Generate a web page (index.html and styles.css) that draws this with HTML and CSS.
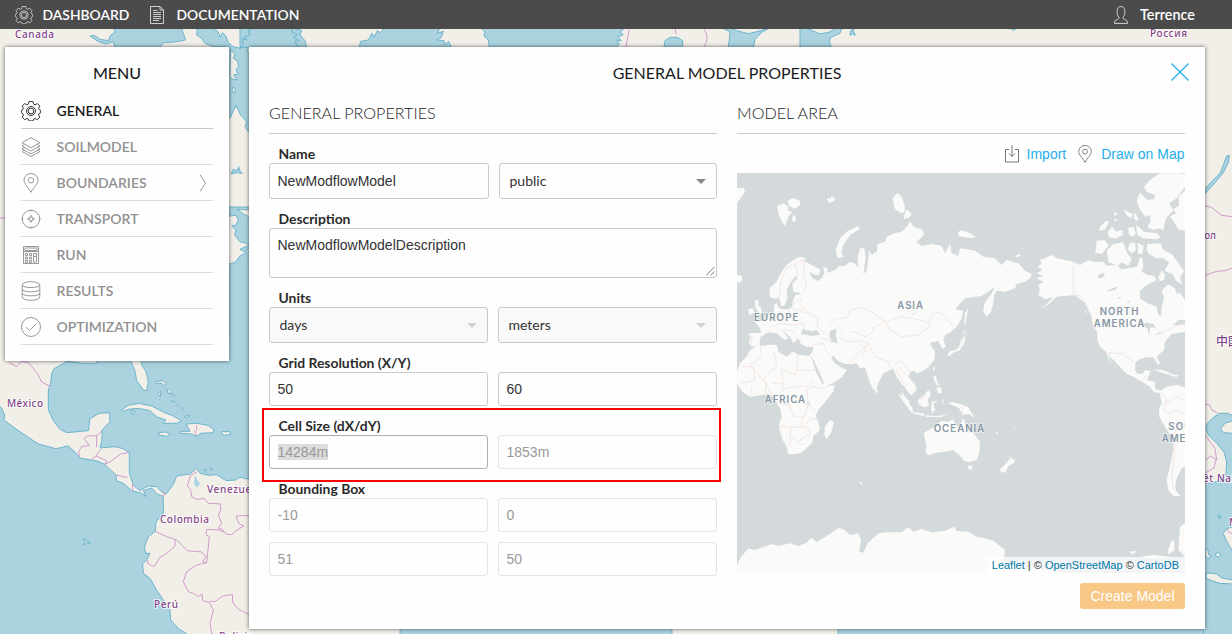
FILE: index.html
```html
<!DOCTYPE html>
<html lang="en">
<head>
<meta charset="utf-8">
<title>General Model Properties</title>
<link rel="stylesheet" href="styles.css">
</head>
<body>
<svg class="world" viewBox="0 0 1232 634" width="1232" height="634" aria-hidden="true">
  <rect width="1232" height="634" fill="#f2efe9"/>
  <!-- northern coasts -->
  <g class="sea" transform="scale(.33333)">
    <path d="M270 108L283 106 300 118 325 122 330 108 345 96 342 84H420L545 86 557 120 525 126 490 128 480 142H345L340 125 318 132 295 125Z"/>
    <path d="M592 84L640 86 655 96 660 112 668 98 678 108 685 128 700 140 722 145 735 118 748 84H880L905 92 900 105 915 122 920 142H750V400L735 382 740 365 722 345 708 316 690 355V142L640 140 615 130 605 115 590 105Z"/>
    <path d="M693 522L700 508 712 512 716 500 720 514 727 520 710 518Z"/>
  </g>
  <g class="land" transform="scale(.33333)">
    <path d="M692 150L705 162 700 175 712 182 716 200 708 208 714 222 700 225 712 240 700 238 690 230Z"/>
    <path d="M698 262l8 3-2 14-8-4zM740 142l10 3v16l-7-6z"/>
  </g>
  <g class="sea" transform="translate(240 0) scale(.33333)">
    <path d="M0 84H38L26 92 30 105 14 112 22 120 8 116 10 135 0 145ZM745 84H1155L1140 96 1150 104 1134 110 1144 122 1130 120 1138 132 1130 142H748L745 120 732 108 735 96 722 84Z"/>
    <path d="M435 84L420 98 412 92 402 112 396 100 385 120 362 124 358 142H634L626 124 615 134 612 122 590 120 604 112 610 94 592 100 600 84ZM-3 84"/>
    <path d="M1272 142L1275 122 1290 112H1312L1328 122V142ZM1446 84L1470 95 1468 120 1464 142H1540L1545 118 1566 96 1590 84 1550 95 1525 101 1490 92 1470 84Z"/>
    <path d="M38 84H155L155 96 172 104 160 112 178 122 164 124 176 142H0L10 135 8 116 22 120 14 112 30 105 26 92Z"/>
  </g>
  <g class="sea" transform="translate(800 0) scale(.33333)">
    <path d="M0 84H20L60 102 90 96 105 84H125L120 100 92 112 88 125 94 142H0ZM150 106L152 92 164 84 160 92 166 106 158 102ZM610 84H650L642 92 635 87Z"/>
  </g>
  <!-- north american east coast -->
  <path class="sea" d="M229 207H250V370H229Z"/>
  <g class="land" transform="translate(0 180) scale(.33333)">
    <path d="M680 112L690 108 708 106 715 120 708 135 695 138 708 150 704 165 720 185 740 190 748 195 720 208 735 216 750 200V212L720 228 708 245 692 252 680 248ZM712 88L750 90V112L730 102Z"/>
  </g>
  <!-- gulf, caribbean, pacific and south america -->
  <path class="sea" d="M400 640V626H672V640ZM838 640V626H1235V640Z"/>
  <g transform="translate(0 360) scale(.33333)">
    <path class="sea" d="M162 26L188 12 200 4 250 10 290 10 292 -15H750V359L720 352 706 360 678 362 650 344 625 346 600 340 590 325 570 342 530 348 520 374 498 402 485 396 470 380 445 378 420 392 400 376 388 340 388 278 370 266 345 260 300 264 306 240 306 210 330 185 328 158 298 160 270 176 265 212 200 218 180 208 160 182 145 150 145 90 152 70 155 40Z"/>
    <path class="sea" d="M-9 134L6 145 8 152 14 165 12 180 45 205 115 252 168 266 205 258 225 276 240 294 295 304 315 314 348 345 350 362 370 370 395 392 425 400 438 410 430 392 455 384 472 402 490 410 490 460 468 486 466 514 445 530 434 560 436 580 450 580 440 600 428 612 430 640 450 655 470 690 490 720 510 750 512 780 535 805 565 825H-9Z"/>
    <g class="land">
      <path d="M388 -5L404 30 410 62 430 90 440 92 445 65 438 35 425 15 425 -5Z"/>
      <path d="M365 150L385 136 415 130 455 138 490 156 520 168 545 182 530 190 490 190 498 180 470 170 450 152 415 145 385 148 370 154ZM558 192L590 190 625 196 642 210 640 218 600 220 592 230 575 222 540 220 542 214 570 214ZM476 218l22-2 14 8-12 5-22-4zM665 215h25l2 8-18 3-10-4z"/>
      <path d="M392 154l10-2 2 6-8 4zM553 170l12-5 3 4-10 5zM473 100l10-6-2 16zM468 66l20-5 10 10-8 7-5-9-16 2zM500 86l4 14 10 0M512 98l14 12M514 122l12 5M530 132l8 7M544 142l6 10M250 535l10 6 4 6-14 8 6-11zM264 544l8 4-5 4zM612 328l8 2-4 7zM630 324l9 5-6 2z"/>
    </g>
    <path d="M586 345L592 360 600 372 592 382 584 376 582 366Z" fill="#aad3df"/>
    <g class="borders">
      <path d="M28 8L50 20 65 4 85 8 112 40 125 66 152 80M238 290L236 276 244 260 268 256 252 236 262 228 290 227 290 262M290 228L306 212M275 298L288 288 302 268M288 288L320 302 315 312 330 306 362 282 388 278M348 345L370 350 382 352M398 370V394M484 410L496 402 486 392M590 196L590 210 584 214 590 228"/>
      <path d="M592 335L572 346 562 378 572 388 575 410 590 418 614 416 625 430 662 432 662 450 655 465 665 490 655 505 668 508 678 522 695 524 708 512 732 498 718 492 708 468 748 466M466 514L500 530 530 540 562 572 605 576 618 590 608 606 620 608 628 530 618 524 620 508 655 510 672 516M526 540L524 560 500 580 480 592 462 620 442 610 445 600M620 608L590 615 560 635 550 665 565 695 580 700 596 710 606 702 608 722 628 728 640 750 630 790 636 825M628 724L645 725 668 708 697 704 698 726 715 748 748 764"/>
    </g>
  </g>
  <rect x="229" y="340" width="21" height="40" fill="#aad3df"/>
  <path class="borders" d="M0 218H5M629 30L626 47M675 29l1 5M704 29q6 8 0 18"/>
  <!-- east asia -->
  <g transform="translate(730 40) scale(.33333)">
    <path class="sea" d="M1490 348L1498 346 1495 368 1480 398 1455 428 1426 460 1424 448 1445 425 1470 400 1482 370Z"/>
    <path class="borders" d="M1426 498L1445 502 1474 526 1506 530M1426 706L1460 694 1486 692 1506 684"/>
  </g>
  <g transform="translate(960 380) scale(.33333)">
    <path class="sea" d="M820 108L804 100 780 100 760 112 742 130 738 148 745 165 770 190 792 216 800 245 798 280 770 305 745 310 730 322V770H820Z"/>
    <path class="land" d="M820 122L795 130 782 145 790 158 820 160ZM736 505l8 5 2 14 8 6-10 6-8-8zM768 520l8-3 6 8-8 7-7-4zM738 578L770 582 785 594 820 600V612L780 610 738 596ZM820 440L800 446 790 460 798 480 810 500 820 520Z"/>
    <path class="sea" d="M775 406l8 2-2 8-6-3z"/>
    <path class="borders" d="M736 72L750 76 756 90 774 100M736 166L765 205 770 240 752 228 738 240M768 240L762 264 738 278M800 446L808 458 820 462"/>
  </g>
  <g class="places">
    <text x="15" y="38" textLength="39">Canada</text>
    <text x="7" y="407" textLength="36">México</text>
    <text x="207" y="493" textLength="54">Venezuela</text>
    <text x="160" y="523" textLength="49">Colombia</text>
    <text x="154" y="608" textLength="24">Perú</text>
    <text x="219" y="640" textLength="34">Bolivia</text>
    <text x="1150" y="37" textLength="37">Россия</text>
    <text x="1179" y="239" textLength="37">Монгол</text>
    <text x="1216" y="346" font-size="12">中国</text>
    <text x="1193" y="482" textLength="48">Việt Nam</text>
    <text x="1229" y="526">M</text>
  </g>
</svg>

<div class="app">
  <header class="topbar">
    <a class="topbar-link"><svg class="icon" width="18" height="18" viewBox="0 0 20 20"><use href="#gear"/></svg>DASHBOARD</a>
    <a class="topbar-link docs"><svg class="icon" width="14" height="18" viewBox="0 0 14 18"><path d="M.5.5h9.5l3.5 3.5v13.500h-13zM10 .5v3.500h3.500M3 4.500h4.500M3 6.500h8M3 8.500h8M3 10.500h8M3 12.500h8M3 14.500h6"/></svg>DOCUMENTATION</a>
    <a class="topbar-link user"><svg class="icon" width="14" height="18" viewBox="0 0 14 18"><path d="M5 11.300C3 9 3 7 3.200 4.300 3.500 1.500 5 .6 7 .6s3.500.9 3.800 3.700C11 7 11 9 9 11.300c-.1 1.400.5 1.700 1.800 2.200 2 .8 2.700 1.300 2.700 3.900H.5c0-2.600.7-3.100 2.700-3.900 1.300-.5 1.900-.8 1.800-2.200z"/></svg>Terrence</a>
  </header>

  <main class="content">
    <nav class="panel menu">
      <h2 class="panel-title menu-title">MENU</h2>
      <a class="menu-item active"><svg class="icon" width="20" height="20" viewBox="0 0 20 20"><g id="gear"><path d="M8 .6h4l.6 2.500 1.500.7 2.200-1.300 2.500 2.600-1.200 2.200.6 1.400 1.500.5v2.600l-1.500.7-.6 1.500 1.200 2.200-2.500 2.500-2.200-1.200-1.500.6-.6 1.800H8l-.7-1.800-1.500-.6-2.100 1.200-2.500-2.500 1.200-2.200-.6-1.500-1.500-.7V9.200l1.500-.5.600-1.400L1.200 5.100l2.500-2.600 2.100 1.300 1.500-.7z"/><circle cx="10" cy="10" r="4.500"/><circle cx="10" cy="10" r="2.900"/></g></svg><span>GENERAL</span></a>
      <a class="menu-item"><svg class="icon" width="20" height="20" viewBox="0 0 20 20"><path d="M10 .7l9 5-9 5-9-5zM3.500 7.200L1 9l9 5 9-5-2.500-1.800M3.500 10.300L1 12l9 5 9-5-2.500-1.700M3.500 12.800L1 14.500l9 5 9-5-2.500-1.700"/></svg><span>SOILMODEL</span></a>
      <a class="menu-item"><svg class="icon" width="20" height="20" viewBox="0 0 20 20"><g id="pin"><path d="M10 19.300C7.500 14.500 3 11 3 7a7 6.500 0 0 1 14 0c0 4-4.500 7.500-7 12.300z"/><circle cx="10" cy="7.300" r="2.700"/></g></svg><span>BOUNDARIES</span><svg class="icon chevron" width="8" height="18" viewBox="0 0 8 18"><path d="M1 .6l5.500 8.400-5.500 8.400"/></svg></a>
      <a class="menu-item"><svg class="icon" width="20" height="20" viewBox="0 0 20 20"><circle cx="10" cy="10" r="8.800"/><circle cx="10" cy="10" r="2.200"/><path d="M10 .3v2M10 17.700v2M.3 10h2M17.700 10h2M10 6v3M10 11v3M6 10h3M11 10h3"/></svg><span>TRANSPORT</span></a>
      <a class="menu-item"><svg class="icon" width="20" height="20" viewBox="0 0 20 20"><path d="M2.500 1.500h15v17h-15zM4 3h12v2.500H4zM2.500 6.500h15M4.500 8.500h2v2h-2zM8.500 8.500h2v2h-2zM12.500 8.500h3v3h-3zM4.500 12h2v2h-2zM8.500 12h2v2h-2zM12.500 11.500h3v5.500h-3zM4.500 15.500h2v2h-2zM8.500 15.500h2v2h-2z"/></svg><span>RUN</span></a>
      <a class="menu-item"><svg class="icon" width="20" height="20" viewBox="0 0 20 20"><path d="M1.200 4C1.200-.4 18.800-.4 18.800 4v12c0 4.400-17.600 4.400-17.600 0zM1.200 4c0 3.400 17.600 3.400 17.600 0M1.200 8c0 3.800 17.600 3.800 17.600 0M1.200 12c0 3.800 17.600 3.800 17.600 0"/></svg><span>RESULTS</span></a>
      <a class="menu-item"><svg class="icon" width="20" height="20" viewBox="0 0 20 20"><circle cx="10" cy="10" r="9.500"/><path d="M5 10.300l3.500 3.200L15 7"/></svg><span>OPTIMIZATION</span></a>
    </nav>

    <section class="panel properties">
      <div class="panel-head">
        <h2 class="panel-title">GENERAL MODEL PROPERTIES</h2>
        <svg class="close" width="18" height="18" viewBox="0 0 18 18"><path d="M.5 .5l17 17M17.500 .5l-17 17"/></svg>
      </div>
      <div class="columns">
        <div class="column">
          <h3 class="section-title">GENERAL PROPERTIES</h3>
          <div class="group">
            <label>Name</label>
            <div class="row name-row"><div class="field tall">NewModflowModel</div><div class="field tall select">public<i class="caret"></i></div></div>
          </div>
          <div class="group">
            <label>Description</label>
            <div class="field area">NewModflowModelDescription<svg class="grip" width="9" height="9" viewBox="0 0 9 9"><path d="M0 8.500L8.500 0M4.500 8.500l4-4"/></svg></div>
          </div>
          <div class="group">
            <label>Units</label>
            <div class="row"><div class="field tall select locked">days<i class="caret"></i></div><div class="field tall select locked">meters<i class="caret"></i></div></div>
          </div>
          <div class="group">
            <label>Grid Resolution (X/Y)</label>
            <div class="row"><div class="field">50</div><div class="field">60</div></div>
          </div>
          <div class="group cell-size">
            <label>Cell Size (dX/dY)</label>
            <div class="row"><div class="field focused"><span class="selection">14284m</span></div><div class="field disabled">1853m</div></div>
          </div>
          <div class="group">
            <label>Bounding Box</label>
            <div class="row"><div class="field disabled">-10</div><div class="field disabled">0</div></div>
            <div class="row second"><div class="field disabled">51</div><div class="field disabled">50</div></div>
          </div>
        </div>

        <div class="column">
          <h3 class="section-title">MODEL AREA</h3>
          <div class="tools">
            <svg class="icon" width="14" height="18" viewBox="0 0 14 18"><path d="M4 4.500H.5v12.500h13V4.500H10M7 .3v11.200M4 8.500l3 3 3-3"/></svg><a>Import</a>
            <svg class="icon pin" width="18" height="18" viewBox="0 0 20 20"><use href="#pin"/></svg><a>Draw on Map</a>
          </div>
          <div class="map">
            <svg width="448" height="400" viewBox="6 9 1344 1200" aria-hidden="true">
              <rect x="6" y="9" width="1344" height="1200" fill="#d4dadc"/>
              <g class="light">
                <!-- eurasia and africa -->
                <path d="M42 490L78 489 75 475 60 455 85 452 92 440 105 432 117 425 118 404 126 398 130 412 140 418 160 418 172 410 174 390 182 375 200 370 175 365 172 340 188 325 182 318 168 335 155 360 158 385 148 408 138 408 132 380 120 387 105 382 103 355 115 345 128 330 140 305 155 285 175 270 195 260 212 265 208 273 240 290 256 300 252 315 240 314 222 306 232 325 250 333 262 322 268 310 265 292 278 295 276 308 300 300 312 288 330 288 345 275 358 280 370 292 368 260 375 235 388 235 392 260 388 290 385 312 395 303 400 270 402 240 410 255 425 245 428 222 450 215 455 200 480 190 500 185 515 170 526 153 535 170 562 178 567 195 545 215 560 228 590 222 620 228 630 250 645 222 650 250 670 258 675 235 720 242 745 260 780 265 800 285 815 270 850 280 870 302 890 312 885 325 870 335 845 342 840 355 810 365 785 362 778 375 775 400 768 425 755 440 745 425 748 400 770 370 780 350 760 365 740 378 710 382 690 385 660 418 684 422 680 445 665 470 645 488 630 495 625 508 632 530 622 537 610 512 600 515 585 518 590 530 600 545 598 570 580 592 560 605 545 610 537 602 525 605 520 620 538 640 546 658 530 675 520 668 505 645 500 660 510 680 524 695 520 710 502 685 502 645 485 622 475 595 465 600 445 610 430 640 422 662 415 660 400 625 390 592 375 595 365 580 345 583 320 580 305 570 295 556 290 565 300 580 318 592 335 600 320 622 300 637 270 650 298 645 295 665 275 690 250 720 242 738 250 755 255 780 235 798 232 818 218 830 210 840 195 850 170 853 160 852 155 830 143 810 135 785 132 765 140 740 135 715 125 700 120 683 100 672 75 676 45 680 22 665 6 642V605L15 580 35 560 45 540 60 532 76 522 84 510 78 495 72 528 50 530 42 520 46 505Z"/>
                <path d="M60 390l12 2-2 12 8 10 3 18-18 3 6-12-8-8zM40 418l14-4 4 14-16 7zM6 315l14 2 2 14-8 8-8-2zM6 55l20-2 4 12-12 18-12 15z"/>
                <path d="M126 108L145 100 158 108 160 122 172 125 160 140 154 160 148 168 138 150 130 130ZM158 92L175 84 195 92 196 104 180 116 162 108ZM172 140l6-5 6 16-8 5-5-6zM276 84l10 2 4-8 9 6-2 10-10 2-6 4-2-8z"/>
                <path d="M302 240L315 205 335 185 370 167 374 178 345 195 325 225 318 250 326 260 308 265ZM473 85L488 68 500 80 510 110 508 128 495 128 478 115ZM515 117l15 15-8 12-16 2 4-16zM668 190l8-9 20 4 18 10-3 9-20-2-18-3zM705 192l18 8-12 4zM840 258l12-6 6 6-14 4z"/>
                <path d="M700 415L690 430 688 460 693 480 684 500 685 530 696 490 690 470ZM685 485l10-4 2 14-8 10zM680 502l5 20-12 20-20 6-8 10-8-2 8-12 20-6 8-10zM593 595l8-8-4 18zM424 655l5 8-3 8-6-8zM285 750L297 755 290 785 275 808 268 795 270 770Z"/>
                <!-- indonesia and philippines -->
                <path d="M488 670L500 675 515 695 532 712 534 727 550 728 570 733 565 738 530 728 510 702ZM548 690L565 678 580 660 588 672 578 690 582 705 570 712 552 705ZM590 695l20-2-15 8 2 12 8 8-8-2-3 12-6-10zM595 617l8 2 4 20 8 4-8 4-8-12zM605 655l12-5 4 18-12 2zM622 686l5 5-3 14zM640 700l12-4 23 6 25 10 12 20 6 12-16-12-20 2-10-20zM572 736l30 2 35-4-20 8-45-2z"/>
                <!-- oceania -->
                <path d="M566 790L590 775 605 765 620 752 640 755 655 748 660 765 675 772 680 755 685 745 695 770 720 795 735 815 734 845 725 870 705 877 688 873 672 855 665 850 655 840 630 845 605 848 580 855 572 848 574 825ZM699 887h14l-4 14-9-4zM822 855l6 10 13 5-8 12-12 5-8 18-12 3-8-8 22-22 10-12zM780 782l10 8-4 2zM835 772l8-6-8 10zM375 936l6 1-1 6-6-2z"/>
                <!-- north america -->
                <path transform="translate(675 0)" d="M232 290L245 282 240 270 275 255 290 265 340 275 360 285 385 270 400 275 430 275 440 287 470 285 485 298 530 290 545 265 550 285 545 305 565 315 582 318 590 330 560 345 540 362 540 385 560 398 590 410 595 435 604 438 605 410 612 385 605 360 625 343 645 355 650 372 660 368 675 390V450L655 450 640 465 675 465V485L635 492 615 515 612 540 590 560 600 580 595 586 580 562 560 562 540 567 527 575 525 600 532 613 550 610 555 600 572 603 565 622 560 630 585 635 585 655 600 662 620 650 650 645 675 652V890L665 895 650 925 645 950 650 965 662 978 640 978 625 960 620 930 630 890 640 840 640 810 615 770 598 740 597 715 605 700 600 670 580 665 570 650 545 635 520 620 500 612 480 590 460 570 443 552 455 580 473 594 465 590 446 568 438 545 420 530 412 510 412 485 400 470 395 440 375 400 345 375 310 378 290 380 270 400 240 418 262 400 280 382 255 387 235 375 240 360 235 345 250 335 230 325 250 317 230 310 247 300Z"/>
                <path transform="translate(675 0)" d="M675 12L655 10H600L570 30 552 50 560 65 585 75 582 88 562 90 540 68 530 90 535 110 555 140 570 135 572 155 562 170 580 180 595 175 610 180 618 145 640 120 628 100 650 85 675 50ZM675 62L655 80 658 105 640 118 648 130 630 140 640 152 655 178 675 182ZM435 155l12-2-10 25-20 5 5-15zM445 182l12-12 10 15 22-5-2 15-18 10-20-2-6-12zM505 175l15-5 8 20-10 10-12-8zM528 165l12 8 10 12 40 5 12 10-12 8-40-3-18-10zM492 118l12 8 15 6-5 12-15-8zM462 128l10 0-4 10-5-4zM462 146l10 2-6 8zM522 128l8 8 6 18-14-6zM410 212l24-2 12 16-20 26-20-3zM440 242l20-20 30-5 10 30 15 20-10 20-20-10-10 10-30-10zM510 220l15-3 2 25-12 8-12-12zM533 218l18 10-5 25-12-3zM540 262l8 5-2 18-12-4zM562 222l40-2 8 20 25 12 22 30 15 20-12 22 8 20-20-12-10-20-25-10 15-25-20-12-20 0-20-12-8-12zM595 320l10-18 10 12-2 16-14 4zM578 598l30 2 35 14-20 0-24-8zM635 614l20 2-4 5-18-4zM374 418l6 8-2 6zM265 602l6 2zM276 606l4 6z"/>
                <!-- antarctica -->
                <path d="M6 1209V1190L15 1165 40 1135 60 1140 110 1122 130 1128 165 1120 190 1128 215 1118 228 1103 245 1115 280 1095 312 1073 328 1080 345 1095 370 1090 378 1110 372 1145 385 1148 398 1120 430 1090 455 1087 500 1087 520 1072 535 1085 560 1077 590 1087 630 1082 658 1070 665 1083 700 1085 725 1100 750 1105 775 1112 790 1125 810 1140 808 1160 798 1182 1000 1209ZM1180 1145l25-2-10 10zM1215 1160l40-5 50 5-50 6zM1300 1140l10-30 8 5v25l-18 14zM1335 1070l15-10v100l-20-20z"/>
              </g>
              <g fill="#d4dadc">
                <path d="M78 500L95 490 112 488 125 490 150 510 160 505 140 480 165 500 175 520 190 505 198 522 215 530 236 530 232 545 222 558 190 554 175 544 155 560 130 545 126 525 105 524 75 528ZM197 492L205 475 215 482 225 478 222 485 245 480 256 494 230 498 215 495ZM288 480L305 478 302 495 308 520 290 515 282 495ZM226 553L235 570 250 600 268 640 262 642 245 610ZM292 555L305 572 325 580 342 588 330 592 308 583 295 574ZM525 437q20 0 22-20-2 14-22 20M217 694l8 2-2 10-8 0z"/>
                <path transform="translate(675 0)" d="M412 318l18-10 5 8-15 10zM440 362l35-14-10 12-20 4zM470 384l16-6-10 8zM500 398l10-8-4 10zM555 458l25 4 8 12-18-2-2 26-6-22-12-8zM590 490l20-6-18 12z"/>
              </g>
              <g class="light-borders">
                <path d="M134 380V360L138 330 155 295 180 282 185 300 188 318M180 282L205 270 208 320 215 350 205 368M175 400L200 385 198 410 220 430 250 445 246 470 270 490M110 470L140 460 175 465 205 460 208 475M108 485L92 490M140 480L175 482 180 500M160 418L175 450M172 415L200 425 215 430M50 495L48 525M282 460L300 448 340 440 345 422 375 412 410 425 435 445 452 455 420 470 410 490 390 500 370 488 345 485M452 455L500 440 545 448 580 458 590 465 550 495 500 500 465 480 452 455M580 458L595 425 620 430 655 470M320 480V510L350 515 380 512 400 520 380 540 360 560 340 583M400 520L420 560 460 575 470 600M230 525L265 520 275 545 290 560M380 560L395 535 375 520M480 580L500 575 515 595 530 605M490 590L520 620 535 640M255 505L280 510 290 520"/>
                <path d="M75 528L80 560 45 585 85 630 110 600 125 590 122 565 115 545M187 555V600L240 600M187 600L180 615 140 595M22 590H55L60 630 15 640M85 630L100 655 110 675M140 600L145 640 140 660 180 650 215 650 235 630M145 640L110 640M140 665L130 700 165 705 175 740 210 740 220 700 215 660 230 650 270 655M135 770L195 772 205 740M200 772L230 745 250 750M165 830V800L170 772M170 800L190 815 225 790M197 825l10-4M225 790L220 772 200 772M485 595L495 625 515 650M555 690L575 675M682 708V735M215 700L245 730M95 635L90 670M50 650V675"/>
                <path transform="translate(675 0)" d="M340 275V370L360 378 385 410M442 548L490 552 525 580M585 495L615 485 640 470 675 460M545 635L560 615M605 668L620 690 610 720 625 730 650 720 675 735M615 700L650 680 675 690M640 800L650 770 675 760M645 810L642 870 635 920 640 960"/>
              </g>
              <g class="regions">
                <text x="57" y="453" textLength="133">EUROPE</text>
                <text x="487" y="418" textLength="77">ASIA</text>
                <text x="89" y="698" textLength="121">AFRICA</text>
                <text x="596" y="786" textLength="152">OCEANIA</text>
                <text x="1094" y="435" textLength="116">NORTH</text>
                <text x="1076" y="471" textLength="152">AMERICA</text>
                <text x="1300" y="780" textLength="116">SOUTH</text>
                <text x="1280" y="817" textLength="152">AMERICA</text>
              </g>
            </svg>
            <div class="attribution"><a>Leaflet</a> | © <a>OpenStreetMap</a> © <a>CartoDB</a></div>
          </div>
          <button class="create">Create Model</button>
        </div>
      </div>
    </section>
  </main>
</div>
</body>
</html>
```

FILE: styles.css
```css
*, *::after { box-sizing: border-box; }
body { margin: 0; width: 1232px; height: 634px; overflow: hidden; position: relative; font-family: Lato, sans-serif; font-size: 14px; color: #1b1c1d; background: #f2efe9; }
.world { position: absolute; left: 0; top: 0; }
.sea { fill: #aad3df; stroke: #6cb5cd; stroke-width: 3; }
.land { fill: #f2efe9; stroke: #6cb5cd; stroke-width: 3; }
path.sea, path.land { stroke-width: 1; }
g[transform] > path.sea, g[transform] > path.land { stroke-width: 3; }
.sea path, .land path { stroke-width: 3; }
.borders { fill: none; stroke: #cf9bcb; stroke-width: 1; }
g[transform] .borders { stroke-width: 3; }
.places { font-family: "Noto Sans", "Noto Sans CJK SC", sans-serif; font-size: 10px; font-weight: 500; fill: #84468a; stroke: #fff; stroke-width: 2; stroke-opacity: .75; paint-order: stroke; }

.app { position: relative; display: flex; flex-direction: column; }
.topbar { height: 29px; display: flex; align-items: center; padding: 0 37px 0 15px; background: #4b4b4b; color: #fff; font-weight: 600; font-size: 13.900px; }
.topbar-link { display: flex; align-items: center; gap: 9.500px; line-height: 30px; }
.topbar .icon { stroke: #d0d0d0; }
.docs { margin-left: 21px; gap: 12px; }
.user { margin-left: auto; gap: 12px; font-size: 14.400px; }
.icon { fill: none; stroke: #999; stroke-width: 1; flex: none; }

.content { display: flex; align-items: flex-start; gap: 20px; padding: 18px 0 0 5px; }
.panel { background: #fefefe; box-shadow: 0 0 4px rgba(0, 0, 0, .6); }
.panel-title { margin: 0; font-size: 16px; line-height: 24px; font-weight: 400; text-align: center; }
.menu { width: 224px; height: 314px; padding: 14px 16px 16px; }
.menu-title { margin-bottom: 8px; font-weight: 500; }
.menu-item { display: flex; align-items: center; height: 36px; gap: 15.500px; border-bottom: 1px solid #ddd; color: #919191; font-weight: 600; font-size: 14px; line-height: 17px; }
.menu-item.active { color: #1b1c1d; border-color: #c8c8c8; }
.menu-item.active .icon { stroke: #333; }
.menu-item .chevron { margin-left: auto; margin-right: 6px; }

.properties { width: 956px; height: 582px; padding: 14px 20px 0; }
.panel-head { position: relative; }
.close { position: absolute; right: -4px; top: 2px; fill: none; stroke: #24b0e8; stroke-width: 1.2; }
.columns { display: grid; grid-template-columns: 448px 448px; gap: 20px; margin-top: 16px; }
.section-title { margin: 0; height: 33px; line-height: 24px; font-size: 16.150px; font-weight: 300; border-bottom: 1px solid #ccc; }
.group { margin-top: 11px; }
.group label { display: block; height: 18px; padding-left: 9.500px; line-height: 18px; font-size: 13.900px; font-weight: 700; color: #2b2b2b; }
.row { display: grid; grid-template-columns: 1fr 1fr; gap: 10px; }
.name-row { grid-template-columns: 220px 218px; }
.second { margin-top: 10px; }
.field { height: 34px; border: 1px solid #c9c9c9; border-radius: 3px; padding: 0 7.500px; line-height: 32px; font-family: "Liberation Sans", Arial, sans-serif; font-size: 14px; color: #333; }
.tall { height: 36px; line-height: 34px; }
.select { display: flex; justify-content: space-between; padding: 0 10px 0 9.500px; font-family: Lato, sans-serif; }
.caret { align-self: center; width: 0; height: 0; border: 5px solid transparent; border-top-color: #888; border-bottom: 0; }
.locked { background: #f9f9f9; }
.locked .caret { border-top-color: #d2d2d2; }
.area { position: relative; height: 50px; line-height: 32px; }
.grip { position: absolute; right: 1px; bottom: 1px; fill: none; stroke: #555; stroke-width: .8; }
.disabled { border-color: #e3e3e3; color: #999; }
.focused { border-color: #aeaeae; color: #999; }
.selection { background: #dcdcdc; }
.cell-size { position: relative; }
.cell-size::after { content: ""; position: absolute; left: -7px; top: -9px; width: 459px; height: 74px; border: 2px solid #f00; }

.tools { display: flex; align-items: center; justify-content: flex-end; height: 39px; font-family: "Liberation Sans", Arial, sans-serif; font-size: 14px; color: #23aee9; padding: 2px .500px 1px 0; }
.tools a { margin-top: -1px; }
.tools .icon { stroke: #777; margin-right: 8px; margin-top: -1px; }
.tools .pin { margin-left: 10px; margin-right: 7px; }
.map { position: relative; height: 400px; overflow: hidden; }
.map > svg { display: block; }
.light { fill: #fafaf8; }
.light-borders { fill: none; stroke: #f4e6e7; stroke-width: 3; }
.regions { font-family: Inter, sans-serif; font-size: 29px; font-weight: 600; fill: #8696a4; stroke: #fafaf8; stroke-width: 5; stroke-opacity: .7; paint-order: stroke; }
.attribution { position: absolute; right: 0; bottom: 0; padding: 0 6px 0 5px; height: 16px; line-height: 16px; font-family: "Liberation Sans", Arial, sans-serif; font-size: 11px; color: #333; background: rgba(255, 255, 255, .7); white-space: nowrap; }
.attribution a { color: #0078a8; }
.create { display: block; margin: 10px 0 0 auto; width: 105px; height: 26px; padding: 0; border: 0; border-radius: 3px; background: #f8c887; color: #fff; font-family: "Liberation Sans", Arial, sans-serif; font-size: 14px; }
```
